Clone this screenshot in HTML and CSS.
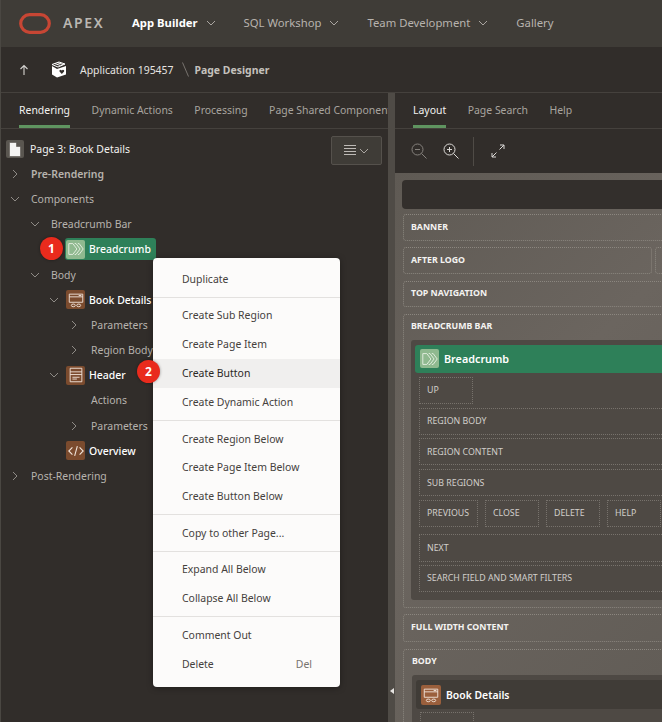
FILE: index.html
```html
<!DOCTYPE html>
<html lang="en">
<head>
    <meta charset="UTF-8">
    <meta name="viewport" content="width=device-width, initial-scale=1.0">
    <title>Page Designer</title>
    <link rel="stylesheet" href="styles.css">
</head>
<body>
    <svg class="defs" width="0" height="0">
        <symbol id="chev-down" viewBox="0 0 10 10"><path d="M1 3l4 4 4-4" fill="none" stroke="currentColor" stroke-width="1"/></symbol>
        <symbol id="chev-right" viewBox="0 0 10 10"><path d="M3 1l4 4-4 4" fill="none" stroke="currentColor" stroke-width="1"/></symbol>
        <symbol id="crumb" viewBox="0 0 20 20"><path d="M2 4h4.500l4.500 6-4.500 6h-4.500l0-12zM8.500 4h1.500l4.500 6-4.500 6h-1.500M12 4h1.500l4.500 6-4.500 6h-1.500" fill="none" stroke="#e8f0e4" stroke-width="1"/></symbol>
        <symbol id="region" viewBox="0 0 20 20"><path d="M2.500 3.500h15v9h-15zM2.500 6.500h15" fill="none" stroke="#f3e7de" stroke-width="1"/><path d="M13 5h3" stroke="#f3e7de"/><ellipse cx="7" cy="16" rx="2.200" ry="1.500" fill="none" stroke="#f3e7de"/><ellipse cx="13" cy="16" rx="2.200" ry="1.500" fill="none" stroke="#f3e7de"/></symbol>
        <symbol id="header" viewBox="0 0 20 20"><path d="M3.500 2.500h13v15h-13zM3.500 6.500h13M3.500 9.500h13" fill="none" stroke="#f3e7de"/><path d="M6 12.500h8M6 14.500h5" stroke="#f3e7de"/></symbol>
        <symbol id="code" viewBox="0 0 20 20"><path d="M6 6l-4 4 4 4M14 6l4 4-4 4M11.500 4.500l-3 11" fill="none" stroke="#f3e7de" stroke-width="1.200"/></symbol>
    </svg>

    <div class="app">
        <header class="topbar">
            <svg class="oracle-logo" width="32" height="21" viewBox="0 0 32 21"><rect x="1.700" y="1.700" width="28.600" height="17.600" rx="8.800" fill="none" stroke="#c74634" stroke-width="3.200"/></svg>
            <span class="apex-name">APEX</span>
            <nav class="topnav">
                <a class="topnav-item active">App Builder <svg class="chev"><use href="#chev-down"/></svg></a>
                <a class="topnav-item">SQL Workshop <svg class="chev"><use href="#chev-down"/></svg></a>
                <a class="topnav-item">Team Development <svg class="chev"><use href="#chev-down"/></svg></a>
                <a class="topnav-item">Gallery</a>
            </nav>
        </header>

        <div class="crumbs">
            <svg class="up-arrow" width="10" height="12" viewBox="0 0 10 12"><path d="M5 11V1.500M1.500 5L5 1.500 8.500 5" fill="none" stroke="#d5d3d0" stroke-width="1.100"/></svg>
            <svg class="app-icon" width="16" height="17" viewBox="0 0 16 17"><path d="M1 5l5 3 9-3v8.500l-9 3-5-3z" fill="#fff"/><path d="M1 3.500l7-2.500 6 2-7 3zM3.500 2.500l6 2M6 1.500l6 2" fill="none" stroke="#fff" stroke-width="1"/><path d="M10.800 13l-2.300-2.500v-1.300l1.200-.5 1.100.8 1.100-.8 1.200.5v1.300z" fill="#312d2a"/></svg>
            <span class="crumb-app">Application 195457</span>
            <svg class="crumb-sep" width="7" height="15" viewBox="0 0 7 15"><path d="M.5 .5l6 14" stroke="#77736e"/></svg>
            <span class="crumb-page">Page Designer</span>
        </div>

        <div class="main">
            <section class="left">
                <div class="tabs">
                    <a class="tab active">Rendering</a>
                    <a class="tab">Dynamic Actions</a>
                    <a class="tab">Processing</a>
                    <a class="tab">Page Shared Components</a>
                </div>
                <div class="tree-panel">
                    <div class="tree-head">
                        <div class="page-row">
                            <span class="page-icon"><svg width="12" height="15" viewBox="0 0 12 15"><path d="M.5 .5h7l4 4v10h-11zM7.500 .5v4h4" fill="#f5f4f2" stroke="#55514c" stroke-width=".6"/></svg></span>
                            <span class="page-title">Page 3: Book Details</span>
                        </div>
                        <button class="menu-btn">
                            <svg width="12" height="11" viewBox="0 0 12 11"><path d="M0 .5h12M0 3.500h12M0 6.500h12M0 9.500h12" stroke="#bdbab6"/></svg>
                            <svg class="chev"><use href="#chev-down"/></svg>
                        </button>
                    </div>
                    <div class="tree">
                        <div class="row lvl0 strong"><svg class="caret"><use href="#chev-right"/></svg>Pre-Rendering</div>
                        <div class="row lvl0"><svg class="caret"><use href="#chev-down"/></svg>Components</div>
                        <div class="row lvl1"><svg class="caret"><use href="#chev-down"/></svg>Breadcrumb Bar</div>
                        <div class="row lvl2-icon">
                            <span class="pill">
                                <span class="node-icon green"><svg width="18" height="18"><use href="#crumb"/></svg></span>
                                Breadcrumb
                            </span>
                        </div>
                        <div class="row lvl1"><svg class="caret"><use href="#chev-down"/></svg>Body</div>
                        <div class="row lvl2 white"><svg class="caret"><use href="#chev-down"/></svg><span class="node-icon brown"><svg width="18" height="18"><use href="#region"/></svg></span>Book Details</div>
                        <div class="row lvl3"><svg class="caret"><use href="#chev-right"/></svg>Parameters</div>
                        <div class="row lvl3"><svg class="caret"><use href="#chev-right"/></svg>Region Body</div>
                        <div class="row lvl2 white"><svg class="caret"><use href="#chev-down"/></svg><span class="node-icon brown"><svg width="18" height="18"><use href="#header"/></svg></span>Header</div>
                        <div class="row lvl3"><span class="caret"></span>Actions</div>
                        <div class="row lvl3"><svg class="caret"><use href="#chev-right"/></svg>Parameters</div>
                        <div class="row lvl2 white"><span class="caret"></span><span class="node-icon brown"><svg width="18" height="18"><use href="#code"/></svg></span>Overview</div>
                        <div class="row lvl0"><svg class="caret"><use href="#chev-right"/></svg>Post-Rendering</div>
                    </div>
                </div>
            </section>

            <div class="splitter"><span class="splitter-arrow"></span></div>

            <section class="right">
                <div class="tabs right-tabs">
                    <a class="tab active">Layout</a>
                    <a class="tab">Page Search</a>
                    <a class="tab">Help</a>
                </div>
                <div class="toolbar">
                    <svg class="tool dim" width="16" height="16" viewBox="0 0 16 16"><circle cx="6.500" cy="6.500" r="5.500" fill="none" stroke="currentColor"/><path d="M4 6.500h5M10.500 10.500l5 5" stroke="currentColor"/></svg>
                    <svg class="tool" width="16" height="16" viewBox="0 0 16 16"><circle cx="6.500" cy="6.500" r="5.500" fill="none" stroke="currentColor"/><path d="M4 6.500h5M6.500 4v5M10.500 10.500l5 5" stroke="currentColor"/></svg>
                    <span class="tool-sep"></span>
                    <svg class="tool" width="14" height="14" viewBox="0 0 14 14"><path d="M8.500 5.500L13 1M9 1h4v4M5.500 8.500L1 13M1 9v4h4" fill="none" stroke="currentColor"/></svg>
                </div>
                <div class="canvas">
                    <div class="canvas-bar"></div>
                    <div class="slot">BANNER</div>
                    <div class="slot-row">
                        <div class="slot wide">AFTER LOGO</div>
                        <div class="slot"></div>
                    </div>
                    <div class="slot">TOP NAVIGATION</div>
                    <div class="slot open">
                        <div class="slot-title">BREADCRUMB BAR</div>
                        <div class="region">
                            <div class="region-head green-head">
                                <span class="node-icon green"><svg width="18" height="18"><use href="#crumb"/></svg></span>
                                Breadcrumb
                            </div>
                            <div class="sub short">UP</div>
                            <div class="sub">REGION BODY</div>
                            <div class="sub">REGION CONTENT</div>
                            <div class="sub">SUB REGIONS</div>
                            <div class="sub-row">
                                <div class="sub prev">PREVIOUS</div>
                                <div class="sub short">CLOSE</div>
                                <div class="sub short">DELETE</div>
                                <div class="sub short">HELP</div>
                            </div>
                            <div class="sub tall">NEXT</div>
                            <div class="sub last">SEARCH FIELD AND SMART FILTERS</div>
                        </div>
                    </div>
                    <div class="slot full">FULL WIDTH CONTENT</div>
                    <div class="slot open body-slot">
                        <div class="slot-title">BODY</div>
                        <div class="region">
                            <div class="region-head">
                                <span class="node-icon brown-light"><svg width="18" height="18"><use href="#region"/></svg></span>
                                Book Details
                            </div>
                            <div class="sub short"></div>
                        </div>
                    </div>
                </div>
            </section>
        </div>
    </div>

    <div class="context-menu">
        <div class="item">Duplicate</div>
        <hr>
        <div class="item">Create Sub Region</div>
        <div class="item">Create Page Item</div>
        <div class="item hover">Create Button</div>
        <div class="item">Create Dynamic Action</div>
        <hr>
        <div class="item">Create Region Below</div>
        <div class="item">Create Page Item Below</div>
        <div class="item">Create Button Below</div>
        <hr>
        <div class="item">Copy to other Page...</div>
        <hr>
        <div class="item">Expand All Below</div>
        <div class="item">Collapse All Below</div>
        <hr>
        <div class="item">Comment Out</div>
        <div class="item">Delete <span class="shortcut">Del</span></div>
    </div>

    <span class="badge badge-one">1</span>
    <span class="badge badge-two">2</span>
</body>
</html>
```

FILE: styles.css
```css
* {
    box-sizing: border-box;
}

body {
    margin: 0;
    background: #312d2a;
    font-family: "Noto Sans", sans-serif;
    font-size: 10.45px;
    color: #b7b3ae;
    overflow: hidden;
}

.defs {
    position: absolute;
}

.app {
    height: 722px;
    display: flex;
    flex-direction: column;
    border-left: 1px solid #4a4742;
}

/* top bar */
.topbar {
    height: 47px;
    flex: none;
    display: flex;
    align-items: center;
    padding: 0 0 2px 18px;
    background: #3f3c37;
}

.oracle-logo {
    margin-top: 1px;
}

.apex-name {
    margin-left: 12px;
    width: 69px;
    font-size: 14px;
    font-weight: 600;
    letter-spacing: 1.6px;
    color: #bab7b2;
}

.topnav {
    display: flex;
    gap: 28px;
}

.topnav-item {
    display: flex;
    align-items: center;
    gap: 8px;
    font-size: 11.3px;
    color: #b7b3ae;
    white-space: nowrap;
}

.topnav-item.active {
    font-weight: 700;
    color: #fff;
}

.chev {
    width: 10px;
    height: 10px;
    color: #aaa6a1;
}

/* breadcrumb strip */
.crumbs {
    height: 46px;
    flex: none;
    display: flex;
    align-items: center;
    padding-left: 18px;
    border-bottom: 1px solid #45413d;
}

.app-icon {
    margin-left: 22px;
}

.crumb-app {
    margin-left: 13px;
    color: #e6e4e1;
}

.crumb-sep {
    margin: 0 6px 0 8px;
}

.crumb-page {
    font-weight: 700;
    color: #c4c1bd;
}

/* panels */
.main {
    flex: 1;
    display: flex;
    min-height: 0;
}

.left {
    width: 387px;
    flex: none;
    overflow: hidden;
}

.splitter {
    width: 7px;
    flex: none;
    background: #4f4b46;
    position: relative;
}

.splitter-arrow {
    position: absolute;
    left: 2px;
    top: 595px;
    border: 3px solid transparent;
    border-left: 0;
    border-right: 4px solid #e6e4e1;
}

.right {
    flex: 1;
    min-width: 0;
    display: flex;
    flex-direction: column;
    overflow: hidden;
}

/* tabs */
.tabs {
    height: 36px;
    display: flex;
    gap: 21.500px;
    padding-left: 18px;
    border-bottom: 1px solid #45413d;
    white-space: nowrap;
}

.tab {
    height: 35px;
    padding-top: 10px;
    color: #a8a49f;
}

.tab.active {
    color: #f2f1ef;
    border-bottom: 3px solid #5f9460;
}

/* rendering tree */
.tree-panel {
    padding-top: 7px;
}

.tree-head {
    height: 32px;
    display: flex;
    justify-content: space-between;
    padding: 0 6px 0 5px;
}

.page-row {
    display: flex;
    align-items: center;
    height: 26px;
    gap: 6px;
    color: #f2f1ef;
}

.page-title {
    margin-bottom: 1px;
}

.page-icon {
    width: 18px;
    height: 18px;
    display: flex;
    align-items: center;
    justify-content: center;
    background: #5a5650;
    border-radius: 2px;
}

.menu-btn {
    width: 51px;
    height: 29px;
    display: flex;
    align-items: center;
    justify-content: center;
    gap: 3px;
    padding: 0;
    background: #3f3c37;
    border: 1px solid #55514c;
    border-radius: 2px;
}

.tree {
    margin-top: -6.800px;
}

.row {
    height: 25.200px;
    display: flex;
    align-items: center;
    white-space: nowrap;
}

.caret {
    width: 10px;
    height: 10px;
    flex: none;
    margin-right: 11px;
    color: #8f8b86;
}

.lvl0 {
    padding-left: 9px;
}

.lvl1 {
    padding-left: 29px;
}

.lvl2 {
    padding-left: 48px;
}

.lvl2 .caret {
    margin-right: 7px;
}

.lvl2-icon {
    padding-left: 64px;
}

.lvl3 {
    padding-left: 68px;
}

.lvl3 .caret {
    margin-right: 12px;
}

.strong {
    font-weight: 600;
}

.white {
    color: #fff;
    font-weight: 500;
}

.white .node-icon {
    margin-right: 4px;
}

.pill {
    height: 22px;
    width: 91px;
    display: flex;
    align-items: center;
    gap: 4px;
    padding-left: 1px;
    background: #2e8059;
    border-radius: 3px;
    color: #fff;
    font-weight: 500;
}

.node-icon {
    width: 19px;
    height: 19px;
    flex: none;
    display: flex;
    align-items: center;
    justify-content: center;
    border-radius: 2px;
}

.node-icon.green {
    background: #8fb98f;
}

.node-icon.brown {
    background: #7b4b2e;
}

.node-icon.brown-light {
    width: 20px;
    height: 20px;
    background: #9a5f3c;
}

/* layout toolbar */
.toolbar {
    height: 44px;
    flex: none;
    display: flex;
    align-items: center;
    padding-left: 16px;
    color: #dcdad7;
}

.tool.dim {
    color: #85817c;
    margin-right: 16px;
}

.tool-sep {
    width: 1px;
    height: 29px;
    margin: 0 17px 0 14px;
    background: #4f4b46;
}

/* layout canvas */
.canvas {
    flex: 1;
    padding: 7px 0 0 8px;
    background: linear-gradient(135deg, #5f5a54, #6b655f 45%, #615c56);
    overflow: hidden;
}

.canvas-bar {
    width: 320px;
    height: 29px;
    margin: 0 0 5px -1px;
    background: #332f2c;
    border-radius: 4px;
}

.slot {
    width: 320px;
    height: 26.700px;
    display: flex;
    align-items: center;
    padding: 0 0 1.500px 7px;
    margin-bottom: 6.600px;
    border: 1px dotted #8b867f;
    border-radius: 3px;
    font-size: 8.800px;
    font-weight: 700;
    color: #f4f3f1;
}

.slot-row {
    display: flex;
    gap: 3px;
    width: 320px;
}

.slot.wide {
    width: 249px;
    flex: none;
}

.slot.full {
    height: 28px;
    padding-bottom: 3px;
}

.slot.open {
    height: auto;
    display: block;
    padding: 0 0 7px 7px;
}

.slot.body-slot {
    padding-left: 8px;
}

.slot-title {
    height: 25px;
    padding-top: 5px;
}

.region {
    padding: 5px 0 8.300px 4px;
    background: #4e4944;
    border-radius: 3px;
    font-weight: 400;
    color: #d2cfcb;
}

.region-head {
    height: 29px;
    display: flex;
    align-items: center;
    gap: 5px;
    padding-left: 5px;
    margin-bottom: 3px;
    background: #403c37;
    border-radius: 3px 0 0 3px;
    font-size: 10.400px;
    font-weight: 600;
    color: #fff;
}

.green-head {
    height: 28px;
    margin-bottom: 4px;
    background: #2e8059;
    font-size: 10.800px;
}

.sub {
    height: 27px;
    display: flex;
    align-items: center;
    margin: 0 0 3.800px 4px;
    padding-left: 7px;
    border: 1px dotted #77726c;
}

.sub.short {
    width: 54px;
}

.sub.tall {
    height: 27.500px;
    margin-bottom: 3.500px;
}

.sub.last {
    height: 26.500px;
    margin-bottom: 0;
}

.sub-row {
    display: flex;
    gap: 7px;
    margin-left: 4px;
    margin-bottom: 7.500px;
}

.sub-row .sub {
    flex: none;
    height: 26.500px;
    margin: 0;
}

.sub.prev {
    width: 59px;
}

/* annotation badges */
.badge {
    position: absolute;
    width: 23px;
    height: 23px;
    display: flex;
    align-items: center;
    justify-content: center;
    background: #e92b1d;
    border-radius: 50%;
    box-shadow: 0 0 3px rgba(0, 0, 0, 0.4);
    font-size: 12px;
    font-weight: 700;
    color: #fff;
}

.badge-one {
    left: 40px;
    top: 237px;
}

.badge-two {
    left: 137px;
    top: 360px;
}

/* context menu */
.context-menu {
    position: absolute;
    left: 153px;
    top: 258px;
    width: 187px;
    height: 429px;
    padding: 7px 0 8px;
    background: #fcfbfa;
    border-radius: 4px;
    box-shadow: 0 1px 6px rgba(0, 0, 0, 0.35);
    color: #45413d;
}

.context-menu hr {
    margin: 3px 0 3.600px;
    border: 0;
    border-top: 1px solid #e3e1df;
}

.item {
    height: 28.900px;
    display: flex;
    align-items: center;
    justify-content: space-between;
    padding: 0 28px 1px 29px;
}

.item.hover {
    background: #f0efee;
    color: #2c2926;
}

.shortcut {
    color: #77736e;
}
```
